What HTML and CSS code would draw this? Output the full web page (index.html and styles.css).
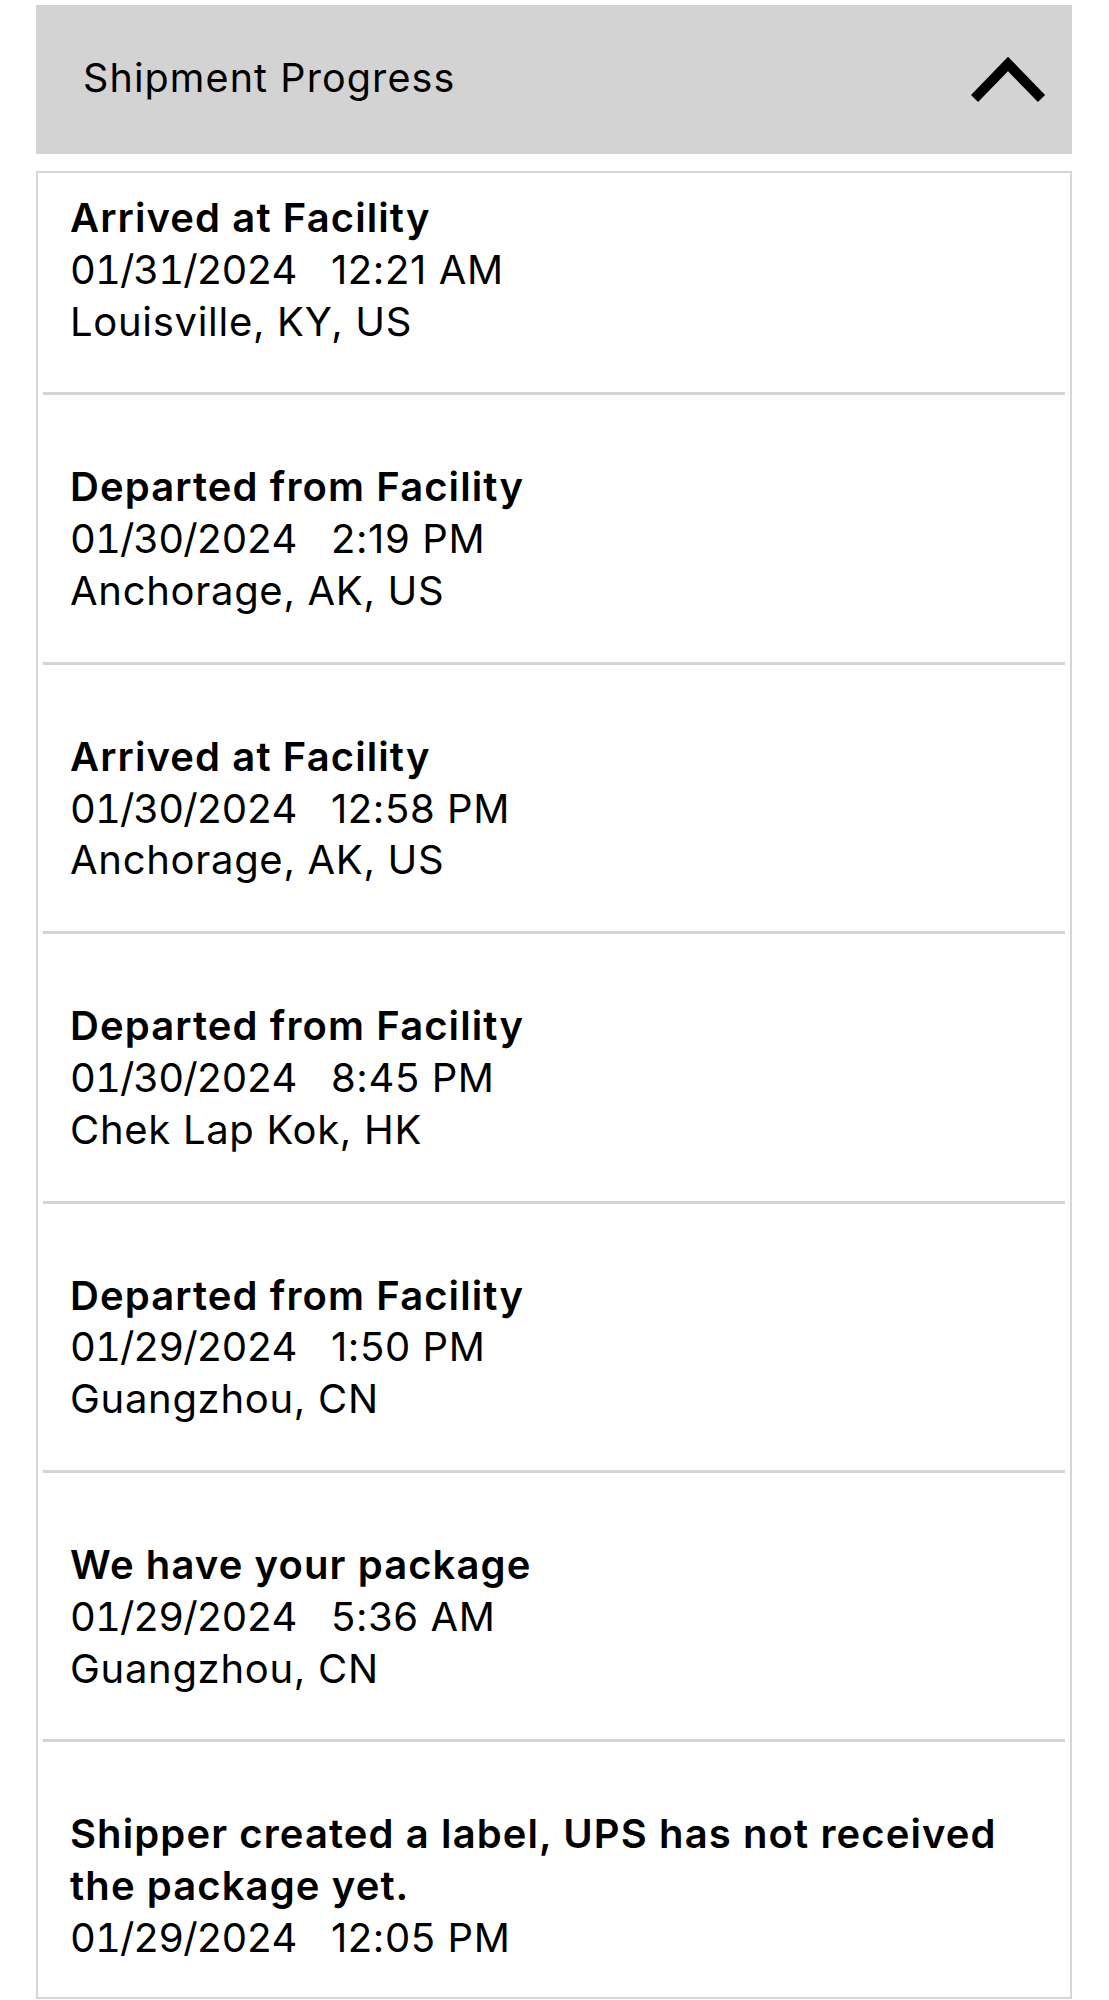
FILE: index.html
```html
<!DOCTYPE html>
<html lang="en">
<head>
<meta charset="utf-8">
<title>Shipment Progress</title>
<link rel="stylesheet" href="styles.css">
</head>
<body>
<div class="page">
  <div class="header">
    <span class="header-title">Shipment Progress</span>
    <svg class="chevron" width="76" height="47" viewBox="0 0 76 47" aria-hidden="true">
      <path d="M3.5 42.5 L37 8 L70.5 42.5" fill="none" stroke="#000" stroke-width="10" stroke-linejoin="miter" stroke-linecap="butt"/>
    </svg>
  </div>
  <div class="card">
    <div class="item first">
      <div class="title">Arrived at Facility</div>
      <div class="when"><span class="date">01/31/2024</span><span class="time">12:21 AM</span></div>
      <div class="where">Louisville, KY, US</div>
    </div>
    <div class="item">
      <div class="title">Departed from Facility</div>
      <div class="when"><span class="date">01/30/2024</span><span class="time">2:19 PM</span></div>
      <div class="where">Anchorage, AK, US</div>
    </div>
    <div class="item">
      <div class="title">Arrived at Facility</div>
      <div class="when"><span class="date">01/30/2024</span><span class="time">12:58 PM</span></div>
      <div class="where">Anchorage, AK, US</div>
    </div>
    <div class="item">
      <div class="title">Departed from Facility</div>
      <div class="when"><span class="date">01/30/2024</span><span class="time">8:45 PM</span></div>
      <div class="where">Chek Lap Kok, HK</div>
    </div>
    <div class="item">
      <div class="title">Departed from Facility</div>
      <div class="when"><span class="date">01/29/2024</span><span class="time">1:50 PM</span></div>
      <div class="where">Guangzhou, CN</div>
    </div>
    <div class="item">
      <div class="title">We have your package</div>
      <div class="when"><span class="date">01/29/2024</span><span class="time">5:36 AM</span></div>
      <div class="where">Guangzhou, CN</div>
    </div>
    <div class="item last">
      <div class="title">Shipper created a label, UPS has not received the package yet.</div>
      <div class="when"><span class="date">01/29/2024</span><span class="time">12:05 PM</span></div>
    </div>
  </div>
</div>
</body>
</html>
```
FILE: styles.css
```css
html, body {
  margin: 0;
  padding: 0;
  background: #ffffff;
}

body {
  font-family: Inter, "Noto Sans", "Liberation Sans", sans-serif;
  color: #000000;
}

.page {
  padding: 5px 37px 0 36px;
}

.header {
  display: flex;
  align-items: center;
  justify-content: space-between;
  height: 149px;
  background: #d3d3d3;
  padding: 0 25px 0 47px;
}

.header-title {
  font-size: 39.5px;
  font-weight: 400;
  letter-spacing: 1.1px;
  margin-bottom: 4px;
}

.chevron {
  display: block;
  flex: none;
}

.card {
  margin-top: 17px;
  border: 2px solid #d6d6d6;
  height: 1828px;
  box-sizing: border-box;
  overflow: hidden;
}

.item {
  margin: 0 5px;
  padding: 66px 0 45px 27px;
  border-bottom: 3px solid #d4d4d0;
  font-size: 40px;
  line-height: 51.8px;
}

.item.first {
  padding-top: 19px;
}

.item.last {
  border-bottom: none;
  padding-bottom: 30px;
  padding-right: 60px;
}

.title {
  font-weight: 600;
  letter-spacing: 1.1px;
}

.when {
  font-weight: 400;
  display: flex;
}

.date {
  display: inline-block;
  width: 224px;
  font-variant-numeric: tabular-nums;
  letter-spacing: -1px;
  white-space: nowrap;
}

.time {
  margin-left: 37px;
  letter-spacing: 0.6px;
  white-space: nowrap;
}

.where {
  font-weight: 400;
  letter-spacing: 0.7px;
}
```
